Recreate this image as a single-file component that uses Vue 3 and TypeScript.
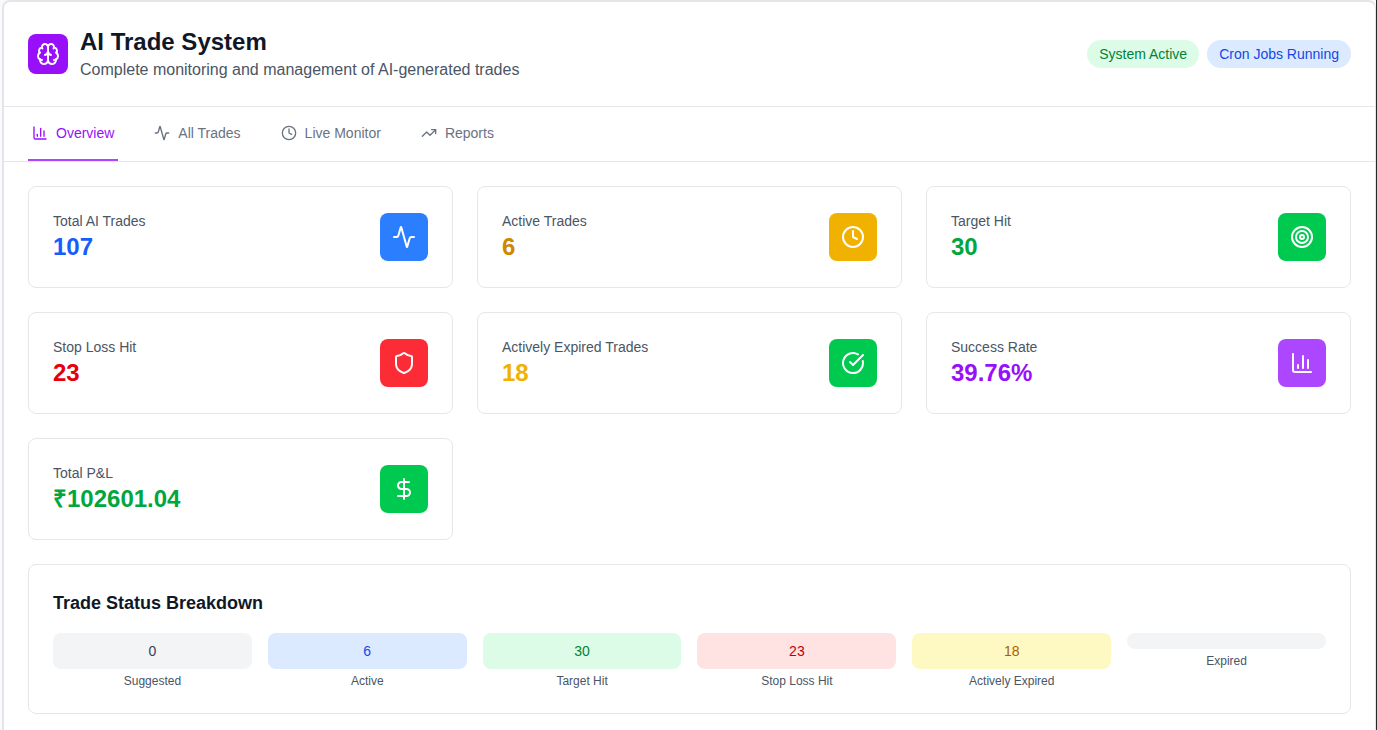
<script setup lang="ts">
import { ref } from 'vue'

type IconName = 'chart' | 'activity' | 'clock' | 'trend' | 'target' | 'shield' | 'check' | 'dollar' | 'brain'

const icons: Record<IconName, string[]> = {
  chart: ['M3 3v16a2 2 0 0 0 2 2h16', 'M18 17V9', 'M13 17V5', 'M8 17v-3'],
  activity: [
    'M22 12h-2.48a2 2 0 0 0-1.93 1.46l-2.35 8.36a.25.25 0 0 1-.48 0L9.24 2.18a.25.25 0 0 0-.48 0l-2.35 8.36A2 2 0 0 1 4.49 12H2',
  ],
  clock: ['M12 2a10 10 0 1 0 0 20a10 10 0 1 0 0-20', 'M12 6v6l4 2'],
  trend: ['M16 7h6v6', 'm22 7-8.5 8.5-5-5L2 17'],
  target: [
    'M12 2a10 10 0 1 0 0 20a10 10 0 1 0 0-20',
    'M12 6a6 6 0 1 0 0 12a6 6 0 1 0 0-12',
    'M12 10a2 2 0 1 0 0 4a2 2 0 1 0 0-4',
  ],
  shield: [
    'M20 13c0 5-3.5 7.5-7.66 8.95a1 1 0 0 1-.67-.01C7.5 20.5 4 18 4 13V6a1 1 0 0 1 1-1c2 0 4.5-1.2 6.24-2.72a1.17 1.17 0 0 1 1.52 0C14.51 3.81 17 5 19 5a1 1 0 0 1 1 1z',
  ],
  check: ['M21.801 10A10 10 0 1 1 17 3.335', 'm9 11 3 3L22 4'],
  dollar: ['M12 2v20', 'M17 5H9.5a3.5 3.5 0 0 0 0 7h5a3.5 3.5 0 0 1 0 7H6'],
  brain: [
    'M12 5a3 3 0 1 0-5.997.125 4 4 0 0 0-2.526 5.77 4 4 0 0 0 .556 6.588A4 4 0 1 0 12 18Z',
    'M12 5a3 3 0 1 1 5.997.125 4 4 0 0 1 2.526 5.77 4 4 0 0 1-.556 6.588A4 4 0 1 1 12 18Z',
    'M15 13a4.5 4.5 0 0 1-3-4 4.5 4.5 0 0 1-3 4',
    'M17.599 6.5a3 3 0 0 0 .399-1.375',
    'M6.003 5.125A3 3 0 0 0 6.401 6.5',
    'M3.477 10.896a4 4 0 0 1 .585-.396',
    'M19.938 10.5a4 4 0 0 1 .585.396',
    'M6 18a4 4 0 0 1-1.967-.516',
    'M19.967 17.484A4 4 0 0 1 18 18',
  ],
}

const tabs: { label: string; icon: IconName }[] = [
  { label: 'Overview', icon: 'chart' },
  { label: 'All Trades', icon: 'activity' },
  { label: 'Live Monitor', icon: 'clock' },
  { label: 'Reports', icon: 'trend' },
]
const activeTab = ref('Overview')

const stats: { label: string; value: string; icon: IconName; text: string; tile: string }[] = [
  { label: 'Total AI Trades', value: '107', icon: 'activity', text: 'text-blue', tile: 'tile-blue' },
  { label: 'Active Trades', value: '6', icon: 'clock', text: 'text-amber', tile: 'tile-yellow' },
  { label: 'Target Hit', value: '30', icon: 'target', text: 'text-green', tile: 'tile-green' },
  { label: 'Stop Loss Hit', value: '23', icon: 'shield', text: 'text-red', tile: 'tile-red' },
  { label: 'Actively Expired Trades', value: '18', icon: 'check', text: 'text-yellow', tile: 'tile-green' },
  { label: 'Success Rate', value: '39.76%', icon: 'chart', text: 'text-purple', tile: 'tile-purple' },
  { label: 'Total P&L', value: '₹102601.04', icon: 'dollar', text: 'text-green', tile: 'tile-green' },
]

const statuses = [
  { label: 'Suggested', value: '0', tone: 'gray' },
  { label: 'Active', value: '6', tone: 'blue' },
  { label: 'Target Hit', value: '30', tone: 'green' },
  { label: 'Stop Loss Hit', value: '23', tone: 'red' },
  { label: 'Actively Expired', value: '18', tone: 'yellow' },
  { label: 'Expired', value: '', tone: 'gray' },
]
</script>

<template>
  <div class="shell">
    <main class="panel">
      <header class="header">
        <div class="brand">
          <span class="logo">
            <svg class="icon icon-md" viewBox="0 0 24 24" aria-hidden="true">
              <path v-for="d in icons.brain" :key="d" :d="d" />
            </svg>
          </span>
          <div>
            <h1>AI Trade System</h1>
            <p class="subtitle">Complete monitoring and management of AI-generated trades</p>
          </div>
        </div>
        <div class="badges">
          <span class="badge green">System Active</span>
          <span class="badge blue">Cron Jobs Running</span>
        </div>
      </header>

      <nav class="tabs">
        <button
          v-for="tab in tabs"
          :key="tab.label"
          type="button"
          class="tab"
          :class="{ active: tab.label === activeTab }"
          @click="activeTab = tab.label"
        >
          <svg class="icon icon-sm" viewBox="0 0 24 24" aria-hidden="true">
            <path v-for="d in icons[tab.icon]" :key="d" :d="d" />
          </svg>
          {{ tab.label }}
        </button>
      </nav>

      <div class="content">
        <section class="stats">
          <article v-for="stat in stats" :key="stat.label" class="card stat">
            <div>
              <p class="stat-label">{{ stat.label }}</p>
              <p class="stat-value" :class="stat.text">{{ stat.value }}</p>
            </div>
            <span class="tile" :class="stat.tile">
              <svg class="icon icon-md" viewBox="0 0 24 24" aria-hidden="true">
                <path v-for="d in icons[stat.icon]" :key="d" :d="d" />
              </svg>
            </span>
          </article>
        </section>

        <section class="card breakdown">
          <h2>Trade Status Breakdown</h2>
          <div class="statuses">
            <div v-for="status in statuses" :key="status.label" class="status">
              <div class="pill" :class="status.tone">{{ status.value }}</div>
              <p class="status-label">{{ status.label }}</p>
            </div>
          </div>
        </section>
      </div>
    </main>
  </div>
</template>

<style>
body {
  background: #f9fafb;
  overflow: hidden;
}
</style>

<style scoped>
* {
  box-sizing: border-box;
}

h1,
h2,
p {
  margin: 0;
}

.shell {
  min-height: 100vh;
  padding-left: 2px;
  border-right: 1px solid #27272a;
  font-family: "Liberation Sans", Arial, sans-serif;
  font-size: 16px;
  line-height: 24px;
  color: #101828;
}

.panel {
  min-height: 100vh;
  background: #fff;
  border: 2px solid #e4e4e9;
  border-right-width: 1px;
  border-bottom: 0;
  border-radius: 8px 8px 0 0;
}

.icon {
  flex: none;
  fill: none;
  stroke: currentColor;
  stroke-width: 2;
  stroke-linecap: round;
  stroke-linejoin: round;
}

.icon-sm {
  width: 16px;
  height: 16px;
}

.icon-md {
  width: 24px;
  height: 24px;
}

.header {
  display: flex;
  align-items: center;
  justify-content: space-between;
  padding: 24px;
  border-bottom: 1px solid #e5e7eb;
}

.brand {
  display: flex;
  align-items: center;
  gap: 12px;
  height: 56px;
}

.logo {
  display: flex;
  padding: 8px;
  border-radius: 8px;
  background: #9810fa;
  color: #fff;
}

h1 {
  font-size: 24px;
  line-height: 32px;
  font-weight: 700;
}

.subtitle {
  color: #4a5565;
}

.badges {
  display: flex;
  gap: 8px;
}

.badge {
  padding: 4px 12px;
  border-radius: 14px;
  font-size: 14px;
  line-height: 20px;
}

.tabs {
  display: flex;
  gap: 32px;
  padding: 0 24px;
  border-bottom: 1px solid #e5e7eb;
}

.tab {
  display: flex;
  align-items: center;
  gap: 8px;
  padding: 16px 4px;
  border: 0;
  border-bottom: 2px solid transparent;
  background: none;
  font: inherit;
  font-size: 14px;
  line-height: 20px;
  color: #6a7282;
  cursor: pointer;
}

.tab.active {
  border-bottom-color: #ad46ff;
  color: #9810fa;
}

.content {
  display: flex;
  flex-direction: column;
  gap: 24px;
  padding: 24px 24px 16px;
}

.card {
  border: 1px solid #e5e7eb;
  border-radius: 8px;
  background: #fff;
  padding: 24px;
}

.stats {
  display: grid;
  grid-template-columns: repeat(3, minmax(0, 1fr));
  gap: 24px;
}

.stat {
  display: flex;
  align-items: center;
  justify-content: space-between;
}

.stat-label {
  font-size: 14px;
  line-height: 20px;
  color: #4a5565;
}

.stat-value {
  font-size: 24px;
  line-height: 32px;
  font-weight: 700;
}

.tile {
  display: flex;
  padding: 12px;
  border-radius: 8px;
  color: #fff;
}

.text-blue { color: #155dfc; }
.text-amber { color: #d08700; }
.text-green { color: #00a63e; }
.text-red { color: #e7000b; }
.text-yellow { color: #f0b100; }
.text-purple { color: #9810fa; }

.tile-blue { background: #2b7fff; }
.tile-yellow { background: #f0b100; }
.tile-green { background: #00c950; }
.tile-red { background: #fb2c36; }
.tile-purple { background: #ad46ff; }

h2 {
  margin-bottom: 16px;
  font-size: 18px;
  line-height: 28px;
  font-weight: 700;
}

.statuses {
  display: grid;
  grid-template-columns: repeat(6, minmax(0, 1fr));
  gap: 16px;
}

.status {
  text-align: center;
}

.pill {
  padding: 8px 12px;
  border-radius: 8px;
  font-size: 14px;
  line-height: 20px;
}

.status-label {
  margin-top: 4px;
  font-size: 12px;
  line-height: 16px;
  color: #4a5565;
}

.gray { background: #f3f4f6; color: #364153; }
.blue { background: #dbeafe; color: #1447e6; }
.green { background: #dcfce7; color: #008236; }
.red { background: #ffe2e2; color: #c10007; }
.yellow { background: #fef9c2; color: #a65f00; }
</style>
